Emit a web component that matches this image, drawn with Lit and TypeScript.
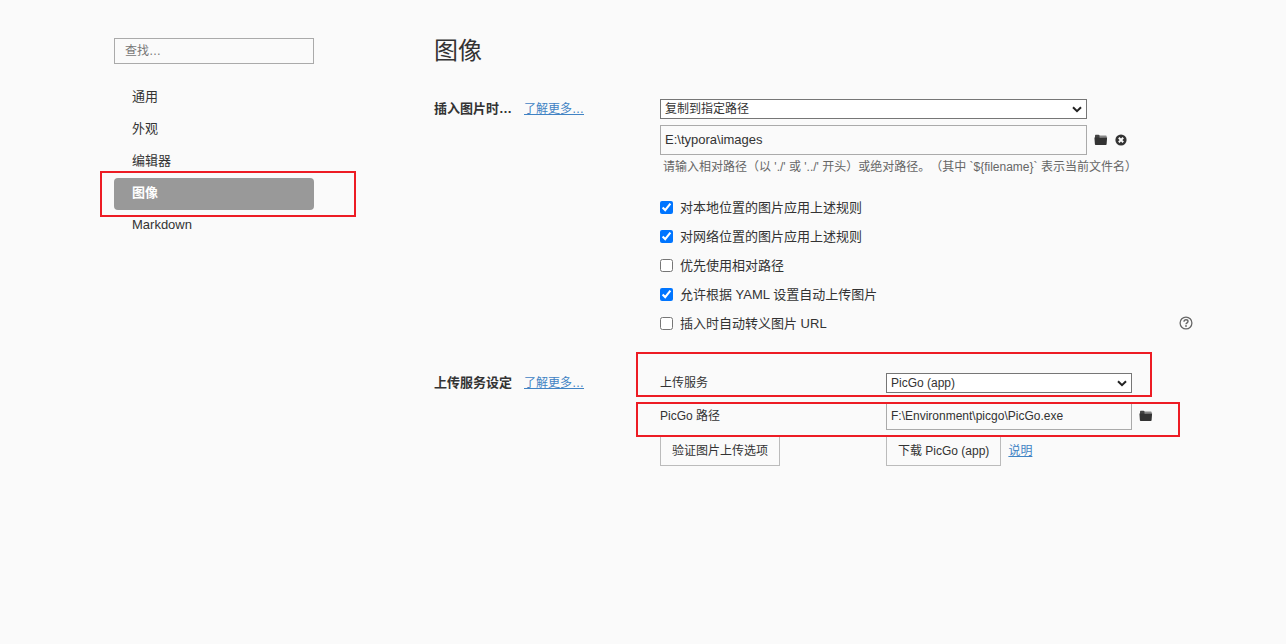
import { LitElement, html, css } from "lit";
import { customElement, state } from "lit/decorators.js";

interface MenuItem {
  label: string;
  active?: boolean;
}

interface Option {
  id: string;
  label: string;
  checked: boolean;
  help?: boolean;
}

const MENU: MenuItem[] = [
  { label: "通用" },
  { label: "外观" },
  { label: "编辑器" },
  { label: "图像", active: true },
  { label: "Markdown" },
];

const HINT =
  "请输入相对路径（以 './' 或 '../' 开头）或绝对路径。（其中 `${filename}` 表示当前文件名）";

const chevron = html`<svg class="chevron" viewBox="0 0 10 7" aria-hidden="true">
  <path d="M1 1.2 5 5.2 9 1.2" fill="none" stroke="#222" stroke-width="2" />
</svg>`;

const folderIcon = html`<svg class="icon-folder" viewBox="0 0 14 12" aria-hidden="true">
  <path d="M5 3.600V1.600h6.800c.6 0 .9.300.9.900v1.200z" fill="#888" />
  <path d="M1 4V1.500c0-.4.3-.7.700-.7h2.800c.5 0 .8.300.9.800L5.600 4z" fill="#444" />
  <path d="M.4 3.600h12.700l-.5 6.600c0 .5-.3.800-.8.800H1.700c-.5 0-.8-.3-.8-.8z" fill="#333" />
</svg>`;

const clearIcon = html`<svg class="icon-round" viewBox="0 0 12 12" aria-hidden="true">
  <circle cx="6" cy="6" r="5.6" fill="#333" />
  <path d="M3.800 3.800 8.200 8.200M8.200 3.800 3.800 8.200" stroke="#fafafa" stroke-width="2" />
</svg>`;

const helpIcon = html`<svg class="icon-help" viewBox="0 0 14 14" aria-hidden="true">
  <circle cx="7" cy="6" r="5.9" fill="none" stroke="#666" stroke-width="1.300" />
  <path
    d="M5 4.700C5 3.400 5.900 2.800 7 2.800s2 .7 2 1.700c0 1.300-2 1.400-2 2.800"
    fill="none"
    stroke="#666"
    stroke-width="1.400"
  />
  <circle cx="7" cy="9" r=".9" fill="#666" />
</svg>`;

@customElement("app-root")
export class AppRoot extends LitElement {
  @state() private options: Option[] = [
    { id: "local", label: "对本地位置的图片应用上述规则", checked: true },
    { id: "network", label: "对网络位置的图片应用上述规则", checked: true },
    { id: "relative", label: "优先使用相对路径", checked: false },
    { id: "yaml", label: "允许根据 YAML 设置自动上传图片", checked: true },
    { id: "escape", label: "插入时自动转义图片 URL", checked: false, help: true },
  ];

  static styles = css`
    :host {
      display: block;
      min-height: 100vh;
      box-sizing: border-box;
      background: #fafafa;
      color: #333;
      font: 13px/20px "Liberation Sans", "Noto Sans CJK SC", sans-serif;
      text-spacing-trim: space-all;
    }
    *,
    *::before {
      box-sizing: border-box;
    }
    input,
    select,
    button {
      font: inherit;
      color: inherit;
      margin: 0;
      border-radius: 0;
    }
    .page {
      display: flex;
      gap: 120px;
      padding: 38px 93px 38px 114px;
    }
    .sidebar {
      flex: 0 0 200px;
    }
    .search {
      display: block;
      width: 100%;
      height: 26px;
      padding: 0 10px;
      border: 1px solid #aaa;
      background: transparent;
      font-size: 12px;
    }
    .search::placeholder {
      color: #777;
    }
    .menu {
      list-style: none;
      margin: 18px 0 0;
      padding: 0;
    }
    .menu-item {
      position: relative;
    }
    .menu-link {
      display: block;
      padding: 0 18px;
      line-height: 30px;
      height: 32px;
      border-radius: 4px;
      color: inherit;
      text-decoration: none;
    }
    .menu-link.active {
      background: #999;
      color: #fff;
      font-weight: bold;
    }
    .main {
      flex: 1;
      min-width: 0;
    }
    .title {
      margin: 0 0 35px;
      font-size: 24px;
      line-height: 26px;
      font-weight: normal;
    }
    .section {
      display: grid;
      grid-template-columns: 226px 1fr;
    }
    .section + .section {
      margin-top: 35px;
    }
    .heading {
      display: flex;
      gap: 12px;
      height: 20px;
    }
    .name {
      margin: 0;
      font-size: 13px;
      font-weight: bold;
    }
    .link {
      color: #4183c4;
      font-size: 12px;
      text-decoration: underline;
    }
    .select-wrap {
      position: relative;
      display: block;
      width: 427px;
      height: 20px;
    }
    .select-wrap.narrow {
      width: 246px;
    }
    .select {
      appearance: none;
      display: block;
      width: 100%;
      height: 20px;
      padding: 0 20px 0 4px;
      border: 1px solid #767676;
      background: #fff;
      font-size: 12px;
      line-height: 18px;
    }
    .chevron {
      position: absolute;
      right: 5px;
      top: 7px;
      width: 10px;
      height: 7px;
      pointer-events: none;
    }
    .path {
      display: flex;
      align-items: center;
      gap: 7px;
      margin-top: 6px;
    }
    .text {
      width: 427px;
      height: 30px;
      padding: 0 4px 2px;
      border: 1px solid #aaa;
      background: transparent;
    }
    .text.narrow {
      width: 246px;
      height: 28px;
      padding-bottom: 0;
      font-size: 12px;
    }
    .icon-button {
      display: flex;
      padding: 0;
      border: 0;
      background: none;
    }
    .icon-folder {
      width: 14px;
      height: 12px;
    }
    .icon-round {
      width: 12px;
      height: 12px;
    }
    .icon-help {
      width: 14px;
      height: 14px;
      overflow: visible;
    }
    .hint {
      margin: 2px 0 16px;
      padding-left: 3px;
      color: #666;
      font-size: 12px;
    }
    .option {
      display: flex;
      align-items: center;
      justify-content: space-between;
      height: 29px;
    }
    .option-label {
      display: flex;
      align-items: center;
      gap: 7px;
    }
    .check {
      width: 13px;
      height: 13px;
    }
    .row {
      position: relative;
      display: grid;
      grid-template-columns: 226px 1fr;
      align-items: center;
      font-size: 12px;
    }
    .row.path-row {
      margin-top: 9px;
    }
    .row.actions {
      margin-top: 6px;
    }
    .field {
      display: flex;
      align-items: center;
      gap: 7px;
    }
    .button {
      height: 30px;
      padding: 0 11px;
      border: 1px solid #bbb;
      background: transparent;
      justify-self: start;
      white-space: nowrap;
    }
    .mark {
      position: absolute;
      z-index: 1;
      border: 2px solid #ed1c24;
      pointer-events: none;
    }
    .mark-menu {
      inset: -7px -42px -7px -14px;
    }
    .mark-service {
      inset: -21px auto -4px -24px;
      width: 516px;
    }
    .mark-path {
      inset: 0 auto -7px -24px;
      width: 544px;
    }
  `;

  private toggle(id: string) {
    this.options = this.options.map((o) =>
      o.id === id ? { ...o, checked: !o.checked } : o
    );
  }

  render() {
    return html`
      <div class="page">
        <nav class="sidebar">
          <input class="search" type="search" placeholder="查找…" aria-label="查找" />
          <ul class="menu">
            ${MENU.map(
              (m) => html`<li class="menu-item">
                <a class="menu-link ${m.active ? "active" : ""}" href="#">${m.label}</a>
                ${m.active ? html`<span class="mark mark-menu"></span>` : ""}
              </li>`
            )}
          </ul>
        </nav>
        <main class="main">
          <h1 class="title">图像</h1>
          <section class="section">
            <div class="heading">
              <h2 class="name">插入图片时…</h2>
              <a class="link" href="#">了解更多…</a>
            </div>
            <div>
              <span class="select-wrap">
                <select class="select" aria-label="插入图片时">
                  <option>复制到指定路径</option>
                </select>
                ${chevron}
              </span>
              <div class="path">
                <input class="text" type="text" aria-label="图片路径" .value=${"E:\\typora\\images"} />
                <button class="icon-button" aria-label="选择文件夹">${folderIcon}</button>
                <button class="icon-button" aria-label="清除">${clearIcon}</button>
              </div>
              <p class="hint">${HINT}</p>
              ${this.options.map(
                (o) => html`<div class="option">
                  <label class="option-label">
                    <input
                      class="check"
                      type="checkbox"
                      .checked=${o.checked}
                      @change=${() => this.toggle(o.id)}
                    />
                    <span>${o.label}</span>
                  </label>
                  ${o.help
                    ? html`<button class="icon-button" aria-label="帮助">${helpIcon}</button>`
                    : ""}
                </div>`
              )}
            </div>
          </section>
          <section class="section">
            <div class="heading">
              <h2 class="name">上传服务设定</h2>
              <a class="link" href="#">了解更多…</a>
            </div>
            <div>
              <div class="row">
                <label for="service">上传服务</label>
                <span class="select-wrap narrow">
                  <select class="select" id="service">
                    <option>PicGo (app)</option>
                  </select>
                  ${chevron}
                </span>
                <span class="mark mark-service"></span>
              </div>
              <div class="row path-row">
                <label for="picgo-path">PicGo 路径</label>
                <div class="field">
                  <input
                    class="text narrow"
                    id="picgo-path"
                    type="text"
                    .value=${"F:\\Environment\\picgo\\PicGo.exe"}
                  />
                  <button class="icon-button" aria-label="选择文件">${folderIcon}</button>
                </div>
                <span class="mark mark-path"></span>
              </div>
              <div class="row actions">
                <button class="button">验证图片上传选项</button>
                <div class="field">
                  <button class="button">下载 PicGo (app)</button>
                  <a class="link" href="#">说明</a>
                </div>
              </div>
            </div>
          </section>
        </main>
      </div>
    `;
  }
}
